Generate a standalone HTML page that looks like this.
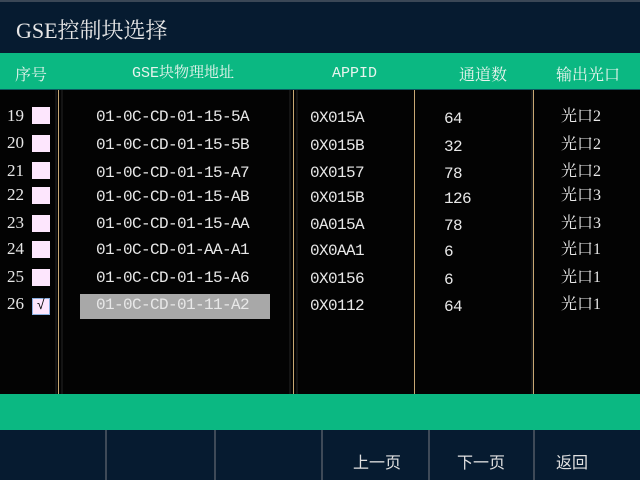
<!DOCTYPE html>
<html><head><meta charset="utf-8"><style>
*{margin:0;padding:0;box-sizing:border-box}
body{width:640px;height:480px;background:#030303;position:relative;overflow:hidden;font-family:"Liberation Mono","Noto Serif CJK SC",monospace;color:#e8e8e8}
.a{position:absolute}
#title{left:0;top:0;width:640px;height:53px;background:#061b30;border-top:2px solid #3a4756}
#title span{position:absolute;left:16px;top:12px;font-size:22px;color:#e6e6e6;font-family:"Liberation Serif","Noto Serif CJK SC",serif}
#hdr{left:0;top:53px;width:640px;height:37px;background:#0bb882;border-bottom:1px solid #0a5c60}
.h{position:absolute;top:3px;line-height:36px;font-size:15px;color:#e8f4ee;white-space:nowrap}
.vl{position:absolute;top:90px;height:304px;width:1px;background:#c8a874}
.vd{position:absolute;top:90px;height:304px;width:2px;background:#141414}
.t{position:absolute;font-size:16px;letter-spacing:-0.6px;line-height:18px;white-space:nowrap}
.cb{position:absolute;left:32px;width:18px;height:17px;background:#fde6fd}
#band{left:0;top:394px;width:640px;height:36px;background:#0bb882}
#foot{left:0;top:430px;width:640px;height:50px;background:#061b30}
.fd{position:absolute;top:430px;width:2px;height:50px;background:#3e4a58}
.ft{position:absolute;top:449px;font-size:16px;color:#e0e0e0;font-family:"Liberation Sans","Noto Sans CJK SC",sans-serif}
.s{font-family:'Liberation Serif','Noto Serif CJK SC',serif;letter-spacing:0}
</style></head><body>
<div id="title" class="a"><span>GSE控制块选择</span></div>
<div id="hdr" class="a">
<div class="h" style="left:15px;font-size:16px;font-family:'Noto Serif CJK SC',serif">序号</div>
<div class="h" style="left:132px">GSE块物理地址</div>
<div class="h" style="left:332px">APPID</div>
<div class="h" style="left:459px;font-size:16px;font-family:'Noto Serif CJK SC',serif">通道数</div>
<div class="h" style="left:556px;font-size:16px;font-family:'Noto Serif CJK SC',serif">输出光口</div>
</div>
<div class="vd" style="left:55px"></div><div class="vl" style="left:58px"></div><div class="vd" style="left:61px"></div>
<div class="vd" style="left:289px"></div><div class="vl" style="left:293px"></div><div class="vd" style="left:296px"></div>
<div class="vl" style="left:414px"></div>
<div class="vd" style="left:531px"></div><div class="vl" style="left:533px"></div>

<div class="a" style="left:80px;top:294px;width:190px;height:25px;background:#a8a8a8"></div>

<div class="t s" style="left:7px;top:107px;font-size:17px">19</div><div class="cb" style="top:107px"></div>
<div class="t s" style="left:7px;top:134px;font-size:17px">20</div><div class="cb" style="top:135px"></div>
<div class="t s" style="left:7px;top:162px;font-size:17px">21</div><div class="cb" style="top:162px"></div>
<div class="t s" style="left:7px;top:186px;font-size:17px">22</div><div class="cb" style="top:187px"></div>
<div class="t s" style="left:7px;top:214px;font-size:17px">23</div><div class="cb" style="top:215px"></div>
<div class="t s" style="left:7px;top:240px;font-size:17px">24</div><div class="cb" style="top:241px"></div>
<div class="t s" style="left:7px;top:268px;font-size:17px">25</div><div class="cb" style="top:269px"></div>
<div class="t s" style="left:7px;top:295px;font-size:17px">26</div><div class="cb" style="top:298px;border:1px solid #8ab0e0;color:#000;font-size:14px;line-height:15px;text-align:center">√</div>

<div class="t" style="left:96px;top:108px">01-0C-CD-01-15-5A</div>
<div class="t" style="left:96px;top:136px">01-0C-CD-01-15-5B</div>
<div class="t" style="left:96px;top:164px">01-0C-CD-01-15-A7</div>
<div class="t" style="left:96px;top:188px">01-0C-CD-01-15-AB</div>
<div class="t" style="left:96px;top:215px">01-0C-CD-01-15-AA</div>
<div class="t" style="left:96px;top:241px">01-0C-CD-01-AA-A1</div>
<div class="t" style="left:96px;top:269px">01-0C-CD-01-15-A6</div>
<div class="t" style="left:96px;top:296px">01-0C-CD-01-11-A2</div>

<div class="t" style="left:310px;top:109px">0X015A</div>
<div class="t" style="left:310px;top:137px">0X015B</div>
<div class="t" style="left:310px;top:164px">0X0157</div>
<div class="t" style="left:310px;top:189px">0X015B</div>
<div class="t" style="left:310px;top:216px">0A015A</div>
<div class="t" style="left:310px;top:242px">0X0AA1</div>
<div class="t" style="left:310px;top:270px">0X0156</div>
<div class="t" style="left:310px;top:297px">0X0112</div>

<div class="t" style="left:444px;top:110px">64</div>
<div class="t" style="left:444px;top:138px">32</div>
<div class="t" style="left:444px;top:165px">78</div>
<div class="t" style="left:444px;top:190px">126</div>
<div class="t" style="left:444px;top:217px">78</div>
<div class="t" style="left:444px;top:243px">6</div>
<div class="t" style="left:444px;top:271px">6</div>
<div class="t" style="left:444px;top:298px">64</div>

<div class="t s" style="left:561px;top:108px">光口2</div>
<div class="t s" style="left:561px;top:136px">光口2</div>
<div class="t s" style="left:561px;top:163px">光口2</div>
<div class="t s" style="left:561px;top:187px">光口3</div>
<div class="t s" style="left:561px;top:215px">光口3</div>
<div class="t s" style="left:561px;top:241px">光口1</div>
<div class="t s" style="left:561px;top:269px">光口1</div>
<div class="t s" style="left:561px;top:296px">光口1</div>

<div id="band" class="a"></div>
<div id="foot" class="a"></div>
<div class="fd" style="left:105px"></div>
<div class="fd" style="left:214px"></div>
<div class="fd" style="left:321px"></div>
<div class="fd" style="left:428px"></div>
<div class="fd" style="left:533px"></div>
<div class="ft" style="left:353px">上一页</div>
<div class="ft" style="left:457px">下一页</div>
<div class="ft" style="left:556px">返回</div>
</body></html>
